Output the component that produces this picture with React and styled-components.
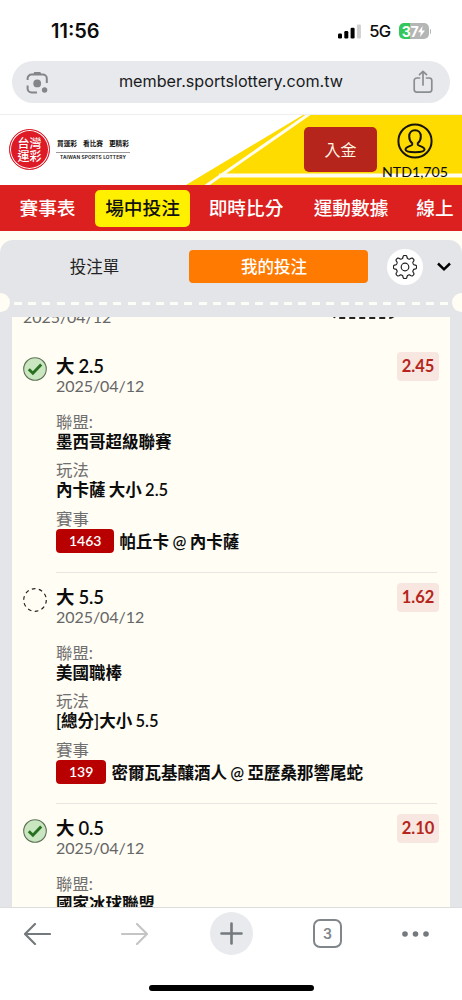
import React from 'react';
import styled, { createGlobalStyle } from 'styled-components';

const GlobalStyle = createGlobalStyle`
  * {
    box-sizing: border-box;
  }

  body {
    margin: 0;
    background: #fff;
    font-family: Lato, 'Noto Sans CJK TC', sans-serif;
    color: #0c0c0c;
  }

  svg {
    display: block;
    flex: none;
  }
`;

const Phone = styled.div`
  display: flex;
  flex-direction: column;
  width: 462px;
  height: 1000px;
  overflow: hidden;
  background: #fff;
`;

/* ---------- status bar + address bar ---------- */

const StatusBar = styled.div`
  display: flex;
  justify-content: space-between;
  align-items: center;
  height: 61px;
  padding: 1px 31px 0 51px;
  font-family: Inter, sans-serif;
`;

const Clock = styled.span`
  font-size: 20px;
  font-weight: 600;
`;

const StatusIcons = styled.div`
  display: flex;
  align-items: center;
`;

const Network = styled.span`
  margin: 0 8px 0 8px;
  font-size: 16.5px;
  font-weight: 500;
  letter-spacing: -0.6px;
`;

const Battery = styled.div`
  display: flex;
  align-items: center;
  justify-content: center;
  width: 30px;
  height: 16px;
  border-radius: 5px;
  background: linear-gradient(90deg, #34c759 37%, #b4b5b5 37%);
  color: #fff;
  font-size: 14px;
  font-weight: 700;
  letter-spacing: -0.4px;
`;

const BatteryTip = styled.span`
  width: 1.5px;
  height: 5px;
  margin-left: 1px;
  border-radius: 0 2px 2px 0;
  background: #b4b5b5;
`;

const AddressBar = styled.div`
  display: flex;
  justify-content: space-between;
  align-items: center;
  flex: none;
  height: 42px;
  margin: 0 12px 11px;
  padding: 0 17px 0 14px;
  border-radius: 21px;
  background: #e7e9ec;
  font-family: Inter, sans-serif;
`;

const Url = styled.span`
  margin-top: -2px;
  font-size: 16.2px;
  color: #1a1b1d;
`;

/* ---------- site header ---------- */

const SiteHeader = styled.header`
  display: flex;
  align-items: flex-start;
  flex: none;
  position: relative;
  z-index: 0;
  height: 71px;
  border-top: 1px solid #eeeeee;
`;

const HeaderStripes = styled.svg`
  position: absolute;
  top: 0;
  right: 0;
  z-index: -1;
`;

const Seal = styled.div`
  display: flex;
  flex-direction: column;
  align-items: center;
  justify-content: center;
  width: 41px;
  height: 41px;
  margin: 14px 0 0 9px;
  border: 1px solid #dc1e2b;
  border-radius: 50%;
  background: #dd1a26;
  box-shadow: inset 0 0 0 1px #fff;
  color: #fff;
  font-size: 12px;
  font-weight: 500;
  line-height: 13px;
`;

const Slogan = styled.div`
  margin: 22px 0 0 6px;
  width: 74px;
  text-align: center;
  white-space: nowrap;
`;

const SloganText = styled.div`
  display: flex;
  justify-content: space-between;
  height: 16px;
  padding: 0 1px;
  border-bottom: 1px solid #9a9a9a;
  font-size: 6.7px;
  font-weight: 700;
  line-height: 13px;
`;

const SloganSub = styled.div`
  padding-top: 1px;
  font-family: Inter, sans-serif;
  font-size: 4.8px;
  font-weight: 600;
  letter-spacing: 0.15px;
  line-height: 6px;
`;

const DepositButton = styled.button`
  width: 73px;
  height: 45px;
  margin: 12px 0 0 174px;
  padding: 0;
  border: 0;
  border-radius: 5px;
  background: #b5251b;
  color: #fff6e4;
  font-family: inherit;
  font-size: 16px;
  line-height: 43px;
`;

const Account = styled.div`
  display: flex;
  flex-direction: column;
  align-items: center;
  width: 76px;
  padding-top: 8px;
`;

const Balance = styled.span`
  margin-top: 5px;
  font-size: 14.2px;
  line-height: 16px;
`;

const Nav = styled.nav`
  display: flex;
  align-items: center;
  flex: none;
  height: 46px;
  background: #dc1f1f;
  overflow: hidden;
`;

const NavItem = styled.a`
  flex: none;
  width: ${({ $width }) => $width}px;
  height: 37px;
  border-radius: 5px;
  background: ${({ $active }) => ($active ? '#fff000' : 'transparent')};
  color: ${({ $active }) => ($active ? '#111' : '#fff')};
  font-size: 18.7px;
  font-weight: 500;
  line-height: 36px;
  text-align: center;
  white-space: nowrap;
`;

/* ---------- bet slip ---------- */

const SlipArea = styled.main`
  display: flex;
  flex: 1;
  flex-direction: column;
  min-height: 0;
  padding-top: 9px;
  background: #fffdf4;
`;

const Slip = styled.section`
  display: flex;
  flex: 1;
  flex-direction: column;
  min-height: 0;
  border-radius: 13px 13px 0 0;
  background: #e4e5e9;
`;

const Tabs = styled.div`
  display: flex;
  align-items: center;
  flex: none;
  height: 53px;
  padding-right: 10px;
`;

const Tab = styled.button`
  width: ${({ $active }) => ($active ? 179 : 189)}px;
  height: 33px;
  padding: ${({ $active }) => ($active ? '0 9px 0 0' : 0)};
  border: 0;
  border-radius: 4px;
  background: ${({ $active }) => ($active ? '#ff7a00' : 'transparent')};
  color: ${({ $active }) => ($active ? '#fff' : '#222')};
  font-family: inherit;
  font-size: 16.5px;
  font-weight: ${({ $active }) => ($active ? 500 : 400)};
  line-height: 32px;
`;

const GearButton = styled.button`
  display: flex;
  align-items: center;
  justify-content: center;
  width: 36px;
  height: 36px;
  margin: 0 14px 0 19px;
  padding: 0;
  border: 0;
  border-radius: 50%;
  background: #fff;
`;

const TearLine = styled.div`
  display: flex;
  align-items: center;
  justify-content: space-between;
  flex: none;
  height: 19px;
`;

const Notch = styled.span`
  width: 10px;
  height: 19px;
  border-radius: ${({ $left }) => ($left ? '0 10px 10px 0' : '10px 0 0 10px')};
  background: #fffdf4;
`;

const Dashes = styled.span`
  width: 434px;
  height: 3px;
  margin-top: 2px;
  background: repeating-linear-gradient(90deg, #fdfdf8 0 8px, transparent 8px 14.2px);
`;

const BetList = styled.div`
  flex: 1;
  min-height: 0;
  margin: 5px 12px 0;
  padding: 0 11px;
  background: #fffdf4;
  overflow: hidden;
`;

const ScrolledRow = styled.div`
  display: flex;
  justify-content: space-between;
  height: 25px;
  padding-right: 44px;
  overflow: hidden;
`;

const BetDate = styled.div`
  font-size: 16px;
  letter-spacing: -0.06px;
  line-height: 17px;
  color: #666;
`;

const ScrolledDate = styled(BetDate)`
  margin-top: -9px;
`;

const DashedBox = styled.div`
  width: 63px;
  height: 30px;
  margin-top: -28px;
  border: 2px dashed #222;
  border-radius: 5px;
`;

const Bet = styled.article`
  display: flex;
  height: 231px;
`;

const BetStatus = styled.div`
  flex: none;
  width: 33px;
  padding-top: 15px;
`;

const BetBody = styled.div`
  flex: 1;
  margin-right: 2px;
  padding-top: 13px;
  border-bottom: 1px solid #e8e6e0;
`;

const BetHead = styled.div`
  display: flex;
  justify-content: space-between;
  height: 40px;
  margin-bottom: 16.5px;
`;

const BetTitle = styled.div`
  font-size: 18.4px;
  font-weight: 600;
  letter-spacing: -0.2px;
  line-height: 22px;
`;

const Odds = styled.span`
  width: 42px;
  height: 29px;
  margin: -3px -2px 0 0;
  border-radius: 4px;
  background: #f8e7e1;
  color: #b5251b;
  font-size: 16.5px;
  font-weight: 700;
  line-height: 29px;
  text-align: center;
`;

const Label = styled.div`
  height: 20px;
  font-size: 16.4px;
  line-height: 19px;
  color: #6f6f6f;
`;

const Value = styled.div`
  height: 20.5px;
  margin-bottom: 8px;
  font-size: 16.5px;
  font-weight: 600;
  line-height: 21px;
  word-spacing: -0.8px;
`;

const Match = styled.div`
  display: flex;
  align-items: center;
  height: 24px;
  margin-top: 0.5px;
  font-size: 16.5px;
  font-weight: 600;
  line-height: 24px;
  white-space: nowrap;
  word-spacing: -0.7px;
`;

const MatchNo = styled.span`
  margin-right: 5px;
  padding: 0 13px;
  border-radius: 4px;
  background: #b90000;
  color: #fff;
  font-size: 14px;
`;

const Teams = styled.span`
  padding-top: 1px;
`;

/* ---------- browser toolbar ---------- */

const Toolbar = styled.footer`
  display: flex;
  flex-direction: column;
  align-items: center;
  justify-content: space-between;
  flex: none;
  height: 93px;
  padding: 4px 0 9px;
  border-top: 1px solid #dddddd;
  background: #fff;
`;

const Tools = styled.div`
  display: grid;
  grid-template-columns: 75px 118px 76px 117px 59px;
  align-items: center;
  justify-items: center;
  width: 100%;
  height: 43px;
`;

const NewTab = styled.span`
  display: flex;
  align-items: center;
  justify-content: center;
  width: 43px;
  height: 43px;
  border-radius: 50%;
  background: #e8eaed;
`;

const TabCount = styled.span`
  width: 29px;
  height: 29px;
  border: 2px solid #80868a;
  border-radius: 7px;
  color: #80868a;
  font-family: Inter, sans-serif;
  font-size: 14px;
  font-weight: 600;
  line-height: 25px;
  text-align: center;
`;

const HomeIndicator = styled.span`
  width: 165px;
  height: 6px;
  border-radius: 3px;
  background: #000;
`;

const SignalIcon = () => (
  <svg width="23" height="15" viewBox="0 0 23 15">
    <rect x="0" y="9.5" width="4" height="5" rx="1.2" fill="#000" />
    <rect x="6.3" y="7" width="4" height="7.5" rx="1.2" fill="#000" />
    <rect x="12.6" y="3.8" width="4" height="10.7" rx="1.2" fill="#000" />
    <rect x="18.9" y="0.5" width="4" height="14" rx="1.2" fill="#cfcfcf" />
  </svg>
);

const BoltIcon = () => (
  <svg width="7" height="11" viewBox="0 0 7 11">
    <path d="M4.6 0 0 6.2h2.8L2 11l5-6.6H4z" fill="#fff" />
  </svg>
);

const LensIcon = () => (
  <svg width="23" height="23" viewBox="0 0 23 23" fill="none" stroke="#838689" strokeWidth="2">
    <path d="M1.6 9V7.5a4 4 0 0 1 4-4h11.2a4 4 0 0 1 4 4V12M1.6 14.5v3a4 4 0 0 0 4 4H11" />
    <path d="M7 3.5 8.3 1h6l1.3 2.5z" fill="#838689" stroke="none" />
    <circle cx="11.2" cy="12.4" r="3.9" fill="#838689" stroke="none" />
    <circle cx="18.6" cy="19" r="2.7" fill="#838689" stroke="none" />
  </svg>
);

const ShareIcon = () => (
  <svg width="20" height="24" viewBox="0 0 20 24" fill="none" stroke="#8b8e91" strokeWidth="1.7" strokeLinecap="round" strokeLinejoin="round">
    <path d="M6.5 8H3.8A2.6 2.6 0 0 0 1.2 10.6v9a2.6 2.6 0 0 0 2.6 2.6h12.4a2.6 2.6 0 0 0 2.6-2.6v-9A2.6 2.6 0 0 0 16.2 8h-2.7" />
    <path d="M10 15V1.5M6.5 4.7 10 1.3l3.5 3.4" />
  </svg>
);

const UserIcon = () => (
  <svg width="36" height="36" viewBox="0 0 36 36" fill="none" stroke="#15130a" strokeWidth="2">
    <circle cx="18" cy="18" r="16.6" />
    <path d="M15.2 20.2c-2-1.7-3-4-3-6.7 0-3.7 2.3-6.2 5.8-6.2s5.8 2.5 5.8 6.2c0 2.7-1 5-3 6.7v1.6c0 1 6.7 1.5 6.7 4.7 0 2.4-5 2.7-9.5 2.7s-9.5-.3-9.5-2.7c0-3.2 6.7-3.7 6.7-4.7z" />
  </svg>
);

// eight-tooth outline, flattened at the crests and valleys
const gearPath = () => {
  const pts = [];
  for (let i = 0; i <= 144; i += 1) {
    const a = (i / 144) * Math.PI * 2;
    const wave = Math.tanh(Math.cos(a * 8) * 2.2);
    const r = 10.2 + wave * 1.4;
    pts.push(`${(12 + r * Math.sin(a)).toFixed(2)} ${(12 - r * Math.cos(a)).toFixed(2)}`);
  }
  return `M${pts.join('L')}Z`;
};

const GearIcon = () => (
  <svg width="24" height="24" viewBox="0 0 24 24" fill="none" stroke="#222" strokeWidth="1.2" strokeLinejoin="round">
    <path d={gearPath()} />
    <circle cx="12" cy="12" r="3.8" />
  </svg>
);

const ChevronIcon = () => (
  <svg width="14" height="10" viewBox="0 0 14 10" fill="none" stroke="#000" strokeWidth="2.5">
    <path d="M1 1.5 7 7.3l6-5.8" />
  </svg>
);

const WonIcon = () => (
  <svg width="24" height="24" viewBox="0 0 24 24">
    <circle cx="12" cy="12" r="11.3" fill="#c9e6c0" stroke="#5d7358" strokeWidth="1.1" />
    <path d="m5.8 12.3 4.1 4 8.3-8.8" fill="none" stroke="#28701f" strokeWidth="2.9" />
  </svg>
);

const PendingIcon = () => (
  <svg width="24" height="24" viewBox="0 0 24 24">
    <circle cx="12" cy="12" r="11.3" fill="none" stroke="#222" strokeWidth="1.2" strokeDasharray="3.7 3.4" />
  </svg>
);

const ArrowIcon = ({ color, flip }) => (
  <svg width="27" height="22" viewBox="0 0 27 22" fill="none" stroke={color} strokeWidth="2.2" strokeLinecap="round" strokeLinejoin="round">
    <path d={flip ? 'M1 11h25M16 1l10 10-10 10' : 'M26 11H1M11 1 1 11l10 10'} />
  </svg>
);

const PlusIcon = () => (
  <svg width="23" height="23" viewBox="0 0 23 23" stroke="#74797d" strokeWidth="2.6" strokeLinecap="round">
    <path d="M11.5 1.5v20M1.5 11.5h20" />
  </svg>
);

const MoreIcon = () => (
  <svg width="27" height="6" viewBox="0 0 27 6" fill="#74797d">
    <circle cx="3" cy="3" r="2.8" />
    <circle cx="13.5" cy="3" r="2.8" />
    <circle cx="24" cy="3" r="2.8" />
  </svg>
);

const navItems = [
  { text: '賽事表', width: 95 },
  { text: '場中投注', width: 95, active: true },
  { text: '即時比分', width: 112 },
  { text: '運動數據', width: 98 },
  { text: '線上', width: 70 },
];

const bets = [
  { won: true, title: '大 2.5', odds: '2.45', league: '墨西哥超級聯賽', play: '內卡薩 大小 2.5', no: '1463', match: '帕丘卡 @ 內卡薩' },
  { won: false, title: '大 5.5', odds: '1.62', league: '美國職棒', play: '[總分]大小 5.5', no: '139', match: '密爾瓦基釀酒人 @ 亞歷桑那響尾蛇' },
  { won: true, title: '大 0.5', odds: '2.10', league: '國家冰球聯盟' },
];

const BetRow = ({ bet }) => (
  <Bet>
    <BetStatus>{bet.won ? <WonIcon /> : <PendingIcon />}</BetStatus>
    <BetBody>
      <BetHead>
        <div>
          <BetTitle>{bet.title}</BetTitle>
          <BetDate>2025/04/12</BetDate>
        </div>
        <Odds>{bet.odds}</Odds>
      </BetHead>
      <Label>聯盟:</Label>
      <Value>{bet.league}</Value>
      {bet.play && (
        <>
          <Label>玩法</Label>
          <Value>{bet.play}</Value>
          <Label>賽事</Label>
          <Match>
            <MatchNo>{bet.no}</MatchNo>
            <Teams>{bet.match}</Teams>
          </Match>
        </>
      )}
    </BetBody>
  </Bet>
);

const App = () => {
  return (
    <Phone lang="zh-Hant">
      <GlobalStyle />
      <StatusBar>
        <Clock>11:56</Clock>
        <StatusIcons>
          <SignalIcon />
          <Network>5G</Network>
          <Battery>37<BoltIcon /></Battery>
          <BatteryTip />
        </StatusIcons>
      </StatusBar>
      <AddressBar>
        <LensIcon />
        <Url>member.sportslottery.com.tw</Url>
        <ShareIcon />
      </AddressBar>
      <SiteHeader>
        <HeaderStripes width="276" height="70" viewBox="0 0 276 70">
          <path d="M0 70 117 0h159v70z" fill="#ffdc00" />
          <path d="M19 71.5 42 55.5 124-1.5" stroke="#fffdf0" strokeWidth="3" fill="none" />
          <path d="M33 60.5h243" stroke="#fffdf0" strokeWidth="4" fill="none" />
        </HeaderStripes>
        <Seal>
          <span>台灣</span>
          <span>運彩</span>
        </Seal>
        <Slogan>
          <SloganText>
            <span>買運彩</span>
            <span>看比賽</span>
            <span>更精彩</span>
          </SloganText>
          <SloganSub>TAIWAN SPORTS LOTTERY</SloganSub>
        </Slogan>
        <DepositButton>入金</DepositButton>
        <Account>
          <UserIcon />
          <Balance>NTD1,705</Balance>
        </Account>
      </SiteHeader>
      <Nav>
        {navItems.map(({ text, width, active }) => (
          <NavItem key={text} $width={width} $active={active}>{text}</NavItem>
        ))}
      </Nav>
      <SlipArea>
        <Slip>
          <Tabs>
            <Tab>投注單</Tab>
            <Tab $active>我的投注</Tab>
            <GearButton><GearIcon /></GearButton>
            <ChevronIcon />
          </Tabs>
          <TearLine>
            <Notch $left />
            <Dashes />
            <Notch />
          </TearLine>
          <BetList>
            <ScrolledRow>
              <ScrolledDate>2025/04/12</ScrolledDate>
              <DashedBox />
            </ScrolledRow>
            {bets.map((bet) => <BetRow key={bet.title} bet={bet} />)}
          </BetList>
        </Slip>
      </SlipArea>
      <Toolbar>
        <Tools>
          <ArrowIcon color="#74797d" />
          <ArrowIcon color="#c3c5c7" flip />
          <NewTab><PlusIcon /></NewTab>
          <TabCount>3</TabCount>
          <MoreIcon />
        </Tools>
        <HomeIndicator />
      </Toolbar>
    </Phone>
  );
};

export default App;
